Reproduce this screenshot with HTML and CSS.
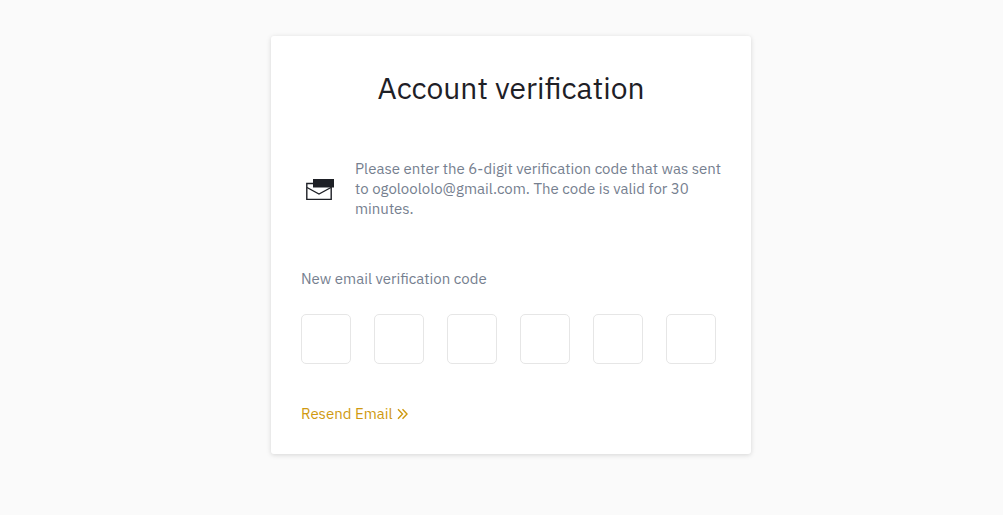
FILE: index.html
```html
<!DOCTYPE html>
<html lang="en">

<head>
    <meta charset="UTF-8">
    <meta name="viewport" content="width=device-width, initial-scale=1.0">
    <title>Account verification</title>
    <link rel="stylesheet" href="styles.css">
</head>

<body>
    <main class="card">
        <h1>Account verification</h1>

        <div class="notice">
            <svg class="mail-icon" viewBox="0 0 30 24" aria-hidden="true">
                <path d="M8 6.5H1.8V22.4H26.2V9" fill="none" stroke="#1e2026" stroke-width="1.4" />
                <path d="M2 10.5L14 17L26 10.5" fill="none" stroke="#1e2026" stroke-width="1.4" />
                <path d="M8 2H29V10.5H8Z" fill="#1e2026" />
            </svg>
            <p>Please enter the 6-digit verification code that was sent to ogoloololo@gmail.com. The code is valid for 30 minutes.</p>
        </div>

        <form>
            <fieldset>
                <legend>New email verification code</legend>
                <div class="code">
                    <input type="text" inputmode="numeric" maxlength="1" aria-label="Digit 1">
                    <input type="text" inputmode="numeric" maxlength="1" aria-label="Digit 2">
                    <input type="text" inputmode="numeric" maxlength="1" aria-label="Digit 3">
                    <input type="text" inputmode="numeric" maxlength="1" aria-label="Digit 4">
                    <input type="text" inputmode="numeric" maxlength="1" aria-label="Digit 5">
                    <input type="text" inputmode="numeric" maxlength="1" aria-label="Digit 6">
                </div>
            </fieldset>
        </form>

        <a class="resend" href="#">
            Resend Email
            <svg class="arrow-icon" viewBox="0 0 12 12" aria-hidden="true">
                <path d="M1 1.3L5.5 6L1 10.7M5.5 1.3L10 6L5.5 10.7" fill="none" stroke="currentColor" stroke-width="1.4" />
            </svg>
        </a>
    </main>
</body>

</html>
```

FILE: styles.css
```css
* {
    box-sizing: border-box;
}

body {
    margin: 0;
    padding: 36px 0 36px 19px;
    background: #fafafa;
    color: #76808f;
    font-family: "IBM Plex Sans", Roboto, sans-serif;
    font-size: 15px;
    line-height: 20px;
}

.card {
    max-width: 480px;
    margin: 0 auto;
    padding: 30px;
    background: #fff;
    border-radius: 3px;
    box-shadow: 0 1px 5px rgba(0, 0, 0, 0.15);
}

h1 {
    margin: 0 0 50px;
    color: #1e2026;
    font-size: 30px;
    font-weight: 400;
    line-height: 43px;
    text-align: center;
}

.notice {
    display: flex;
    align-items: center;
    gap: 20px;
    margin: 0 -10px 50px 0;
    padding-left: 4px;
}

.notice p {
    flex: 1;
    margin: 0;
}

.mail-icon {
    width: 30px;
    height: 24px;
}

fieldset {
    margin: 0;
    padding: 0;
    border: none;
}

legend {
    padding: 0;
}

.code {
    display: flex;
    gap: 23px;
    padding: 25px 0 40px;
}

.code input {
    width: 50px;
    height: 50px;
    padding: 0;
    border: 1px solid #e6e6e6;
    border-radius: 5px;
    background: #fff;
    color: #1e2026;
    font: inherit;
    text-align: center;
}

.resend {
    display: flex;
    align-items: center;
    gap: 4px;
    color: #d09a10;
    text-decoration: none;
}

.arrow-icon {
    width: 12px;
    height: 12px;
}
```
